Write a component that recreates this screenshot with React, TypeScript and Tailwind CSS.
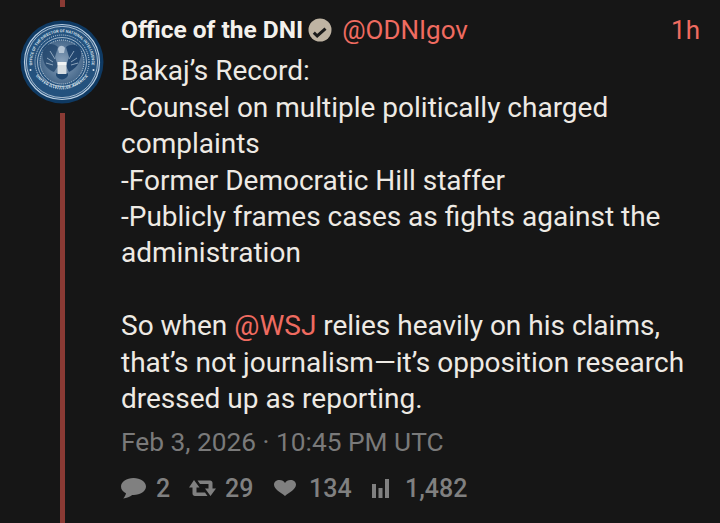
import * as React from "react";

const Seal = () => (
  <svg viewBox="0 0 84 84" className="w-[84px] h-[84px]">
    <defs>
      <path id="sealTop" d="M16.500 57.500 A29.800 29.800 0 1 1 67.500 57.500" />
      <path id="sealBottom" d="M12 50 A33.500 33.500 0 0 0 72 50" />
      <radialGradient id="sealInner" cx="50%" cy="50%" r="55%">
        <stop offset="0%" stopColor="#8ba3bc" />
        <stop offset="100%" stopColor="#3f6286" />
      </radialGradient>
    </defs>
    <circle cx="42" cy="42" r="41.500" fill="#0f3a63" />
    <circle cx="42" cy="42" r="37.500" fill="#24527e" stroke="#b9cde0" strokeWidth="1.200" />
    <circle cx="42" cy="42" r="35.600" fill="none" stroke="#dfe8f0" strokeWidth="0.700" />
    <text fontSize="3.900" fill="#d5e0ea" fontFamily="Roboto, sans-serif" fontWeight="700">
      <textPath href="#sealTop" startOffset="50%" textAnchor="middle">OFFICE OF THE DIRECTOR OF NATIONAL INTELLIGENCE</textPath>
    </text>
    <text fontSize="3.900" fill="#d5e0ea" fontFamily="Roboto, sans-serif" fontWeight="700" letterSpacing="0.300">
      <textPath href="#sealBottom" startOffset="50%" textAnchor="middle">UNITED STATES OF AMERICA</textPath>
    </text>
    <circle cx="42" cy="42" r="27" fill="none" stroke="#e4ecf3" strokeWidth="0.900" strokeDasharray="1 1.100" />
    <circle cx="42" cy="42" r="24.500" fill="none" stroke="#d5e0ea" strokeWidth="0.700" />
    <circle cx="42" cy="42" r="22" fill="url(#sealInner)" stroke="#e4ecf3" strokeWidth="0.900" strokeDasharray="1 1" />
    {/* eagle */}
    <path d="M38 27c-4-4-11-4-14 0-2 4-2 10 0 15 1 4 5 8 10 10l4-6-3-9z" fill="#1e4268" opacity="0.750" />
    <path d="M46 27c4-3 11-3 14 1 2 5 1 10-1 14-2 5-5 7-10 10l-3-6 3-9z" fill="#1b3f69" opacity="0.900" />
    <path d="M38 29c1-4 5-4 7-1l-1 5h-5z" fill="#c8d5e1" opacity="0.800" />
    <path d="M30 31l5 8M54 31l-5 8M27 38l6 4M57 38l-6 4M26 43l7 2M58 43l-7 2" stroke="#a8bccf" strokeWidth="0.800" />
    <path d="M36.500 53c-2 3 2 6 5.500 6.500 3.500-.5 7.500-3.500 5.500-6.500z" fill="#234a73" />
    <rect x="37.500" y="42" width="9" height="3" fill="#f1f3f4" />
    <rect x="37.500" y="45" width="9" height="9" fill="#c7cfd6" />
    <path d="M39 45v9M41 45v9M43 45v9M45 45v9" stroke="#eef1f3" strokeWidth="0.800" />
    <circle cx="10.500" cy="50" r="1" fill="#dfe8f0" />
    <circle cx="73.500" cy="50" r="1" fill="#dfe8f0" />
  </svg>
);

const Verified = () => (
  <svg viewBox="0 0 24 24" className="w-[24px] h-[24px]">
    <circle cx="12" cy="12" r="11.500" fill="#bfb4a3" />
    <path d="M5.800 14.700l3.400 3.300 8.300-7.300" fill="none" stroke="#1c1c1c" strokeWidth="3" />
  </svg>
);

const Comment = () => (
  <svg viewBox="0 0 25 21" className="w-[25px] h-[21px]" fill="#808080">
    <path d="M12.500 0C5.600 0 0 3.700 0 8.500c0 3 2.100 5.400 5 6.800-.4 1.900-1.400 3.700-2.700 5.200 3.300-.5 6.700-1.900 8.900-3.600h1.300C19.400 16.900 25 13.200 25 8.500S19.400 0 12.500 0z" />
  </svg>
);

const Retweet = () => (
  <svg viewBox="0 0 27 16" className="w-[27px] h-[16px]" fill="#808080">
    <path d="M5 0l5.500 7.500H7.500v5H16l2.500 3.500H6c-1.500 0-2.500-1-2.500-2.500v-6H0z" />
    <path d="M21.500 16L16 8.500h3.500V4H11L8.500.5H21c1.500 0 2.500 1 2.500 2.500v5.500H27z" />
  </svg>
);

const Heart = () => (
  <svg viewBox="0 0 22 16" className="w-[22px] h-[16px]" fill="#808080">
    <path d="M11 16C6.500 12.500 0 9.500 0 4.600 0 1.900 2.300 0 5.500 0 8 0 10 1 11 3c1-2 3-3 5.500-3C19.700 0 22 1.900 22 4.600 22 9.500 15.500 12.500 11 16z" />
  </svg>
);

const Bars = () => (
  <svg viewBox="0 0 17 19" className="w-[17px] h-[19px]" fill="#808080">
    <rect x="0" y="5" width="4" height="14" />
    <rect x="6.500" y="9" width="4" height="10" />
    <rect x="13" y="0" width="4" height="19" />
  </svg>
);

const Stat = ({ icon, value, className }: { icon: React.ReactNode; value: string; className: string }) => (
  <div className={`flex items-center ${className}`}>
    {icon}
    <span>{value}</span>
  </div>
);

export default function App() {
  return (
    <div className="flex w-[720px] h-[523px] overflow-hidden bg-[#161616] font-['Roboto',sans-serif]">
      {/* Thread column */}
      <div className="flex flex-col items-center w-[84px] ml-5 shrink-0">
        <div className="w-[5px] h-[7px] bg-[#8a3a34]" />
        <div className="mt-[13px]">
          <Seal />
        </div>
        <div className="w-[5px] flex-1 mt-[9px] bg-[#8a3a34]" />
      </div>

      {/* Tweet */}
      <div className="flex-1 ml-[17px] pr-5 flex flex-col">
        <div className="flex items-center h-[24px] mt-[18px] text-[26px]">
          <span className="text-[24.500px] font-bold text-[#f4f1ec]">Office of the DNI</span>
          <span className="ml-[5px]">
            <Verified />
          </span>
          <span className="ml-[10px] text-[#ef6b60]">@ODNIgov</span>
          <span className="ml-auto text-[#ef6b60]">1h</span>
        </div>
        <div className="mt-[11.300px] text-[28px] leading-[36.400px] text-[#eeeae4]">
          <div>Bakaj’s Record:</div>
          <div>-Counsel on multiple politically charged</div>
          <div>complaints</div>
          <div>-Former Democratic Hill staffer</div>
          <div>-Publicly frames cases as fights against the</div>
          <div>administration</div>
          <div className="h-[36.400px]" />
          <div>
            So when <span className="text-[#ef6b60]">@WSJ</span> relies heavily on his claims,
          </div>
          <div>that’s not journalism—it’s opposition research</div>
          <div>dressed up as reporting.</div>
        </div>
        <div className="mt-[10px] text-[26.300px] leading-[30px] text-[#7a7a7a]">Feb 3, 2026 · 10:45 PM UTC</div>
        <div className="flex items-center mt-[16px] h-[30px] text-[25px] font-medium text-[#808080]">
          <Stat icon={<Comment />} value="2" className="gap-[10px] w-[68px]" />
          <Stat icon={<Retweet />} value="29" className="gap-[9px] w-[85px]" />
          <Stat icon={<Heart />} value="134" className="gap-[13px] w-[98px]" />
          <Stat icon={<Bars />} value="1,482" className="gap-[16px]" />
        </div>
      </div>
    </div>
  );
}
